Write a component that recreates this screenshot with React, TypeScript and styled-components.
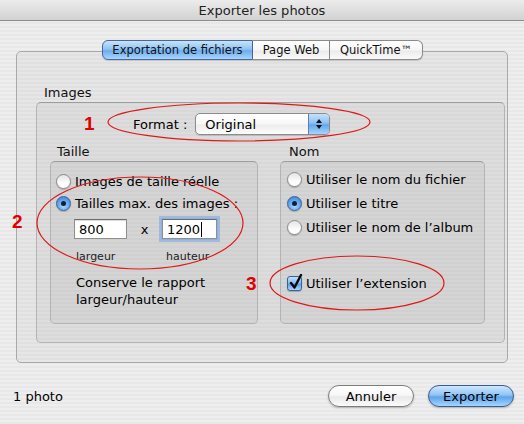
import React from "react";
import styled, { createGlobalStyle } from "styled-components";

const Global = createGlobalStyle`
  html, body { margin: 0; padding: 0; background: #ececec; }
  body { font-family: "Lucida Grande", "DejaVu Sans", sans-serif; color: #000; }
  #root { width: 524px; height: 424px; }
`;

const stripes = `repeating-linear-gradient(to bottom, #eeeeee 0px, #eeeeee 2px, #e8e8e8 2px, #e8e8e8 4px)`;

const Window = styled.div`
  position: relative;
  width: 524px;
  height: 424px;
  display: flex;
  flex-direction: column;
  overflow: hidden;
  background: ${stripes};
`;

const TitleBar = styled.div`
  height: 20px;
  border-bottom: 1px solid #8c8c8c;
  background: linear-gradient(to bottom, #ececec, #d2d2d2);
  display: flex;
  align-items: center;
  justify-content: center;
  font-size: 13px;
  color: #222;
`;

const Body = styled.div`
  flex: 1;
  display: flex;
  flex-direction: column;
  padding-top: 19px;
`;

const TabStrip = styled.div`
  position: relative;
  z-index: 1;
  display: flex;
  justify-content: center;
  margin-bottom: -9px;
  padding-left: 1px;
`;

const Tab = styled.div<{ $active?: boolean; $first?: boolean; $last?: boolean; $w: number }>`
  width: ${(p) => p.$w}px;
  height: 18px;
  box-sizing: content-box;
  display: flex;
  align-items: center;
  justify-content: center;
  font-size: 11.5px;
  border: 1px solid ${(p) => (p.$active ? "#46679b" : "#8a8a8a")};
  border-left-width: ${(p) => (p.$first ? 1 : 0)}px;
  border-radius: ${(p) => (p.$first ? "6px 0 0 6px" : p.$last ? "0 6px 6px 0" : "0")};
  background: ${(p) =>
    p.$active
      ? "linear-gradient(to bottom, #c9e3fb 0%, #8ec3f3 45%, #6cacee 55%, #a9d6ff 100%)"
      : "linear-gradient(to bottom, #ffffff 0%, #f6f6f6 50%, #ebebeb 55%, #fafafa 100%)"};
  box-shadow: 0 1px 1px rgba(0, 0, 0, 0.15);
  color: #111;
`;

const TabBox = styled.div`
  margin: 0 16px 0 16px;
  height: 312px;
  box-sizing: border-box;
  border: 1px solid #a9a9a9;
  border-radius: 5px;
  background: rgba(0, 0, 0, 0.03);
  padding: 33px 2px 0 19px;
  display: flex;
  flex-direction: column;
`;

const GroupLabel = styled.div<{ $indent: number }>`
  font-size: 13px;
  line-height: 16px;
  margin: 0 0 1px ${(p) => p.$indent}px;
  color: #111;
`;

const GroupBox = styled.div<{ $h: number }>`
  height: ${(p) => p.$h}px;
  box-sizing: border-box;
  border: 1px solid #b3b3b3;
  border-top-color: #9d9d9d;
  border-radius: 5px;
  background: rgba(0, 0, 0, 0.035);
`;

const ImagesBox = styled(GroupBox)`
  padding: 10px 0 0 13px;
  display: flex;
  flex-direction: column;
`;

const FormatRow = styled.div`
  display: flex;
  align-items: center;
  height: 22px;
  padding-left: 83px;
  gap: 8px;
  font-size: 13px;
`;

const Popup = styled.div`
  width: 135px;
  height: 22px;
  box-sizing: border-box;
  border: 1px solid #8c8c8c;
  border-radius: 5px;
  display: flex;
  overflow: hidden;
  background: linear-gradient(to bottom, #ffffff 0%, #f7f7f7 50%, #ececec 55%, #fdfdfd 100%);
  box-shadow: 0 1px 1px rgba(0, 0, 0, 0.15);
`;

const PopupText = styled.div`
  flex: 1;
  padding-left: 9px;
  display: flex;
  align-items: center;
  font-size: 13px;
`;

const PopupArrows = styled.div`
  width: 20px;
  border-left: 1px solid #5a7fb5;
  display: flex;
  align-items: center;
  justify-content: center;
  background: linear-gradient(to bottom, #c6e1fb 0%, #8cc2f4 45%, #64a7ec 55%, #a7d4fe 100%);
`;

const Columns = styled.div`
  display: grid;
  grid-template-columns: 208px 205px;
  column-gap: 22px;
  margin-top: 9px;
`;

const Column = styled.div`
  display: flex;
  flex-direction: column;
`;

const InnerBox = styled(GroupBox)<{ $pt: number; $pl: number }>`
  padding: ${(p) => p.$pt}px 0 0 ${(p) => p.$pl}px;
  display: flex;
  flex-direction: column;
`;

const OptionRow = styled.div<{ $mt?: number }>`
  display: flex;
  align-items: center;
  height: 20px;
  gap: 4px;
  margin-top: ${(p) => p.$mt ?? 0}px;
  font-size: 13px;
  white-space: nowrap;
`;

const RadioDot = styled.span<{ $on?: boolean }>`
  width: 15px;
  height: 15px;
  box-sizing: border-box;
  border-radius: 50%;
  flex: none;
  display: flex;
  align-items: center;
  justify-content: center;
  border: 1px solid ${(p) => (p.$on ? "#3d5f99" : "#8a8a8a")};
  background: ${(p) =>
    p.$on
      ? "radial-gradient(circle at 50% 70%, #a8d8ff 0%, #5da3ea 55%, #3a78c8 100%)"
      : "linear-gradient(to bottom, #e4e4e4 0%, #fbfbfb 60%, #ffffff 100%)"};
  box-shadow: 0 1px 1px rgba(0, 0, 0, 0.2);
  &::after {
    content: "";
    display: ${(p) => (p.$on ? "block" : "none")};
    width: 5px;
    height: 5px;
    border-radius: 50%;
    background: #10203a;
  }
`;

const CheckBox = styled.span`
  width: 15px;
  height: 15px;
  box-sizing: border-box;
  flex: none;
  border: 1px solid #3d5f99;
  border-radius: 3px;
  background: linear-gradient(to bottom, #c4e0fb 0%, #86bdf2 45%, #5c9fe8 55%, #a8d6ff 100%);
  box-shadow: 0 1px 1px rgba(0, 0, 0, 0.2);
  position: relative;
  overflow: visible;
  & > svg {
    position: absolute;
    left: 1px;
    top: -3px;
  }
`;

const SizeGrid = styled.div`
  display: grid;
  grid-template-columns: 53px 35px 55px;
  margin: 6px 0 0 18px;
  align-items: center;
`;

const Field = styled.div<{ $focus?: boolean }>`
  height: 20px;
  box-sizing: border-box;
  background: #fff;
  border: 1px solid #8f8f8f;
  border-top-color: #6c6c6c;
  display: flex;
  align-items: center;
  padding-left: 4px;
  font-size: 13px;
  box-shadow: ${(p) =>
    p.$focus ? "0 0 0 1px #8fb1dc, 0 0 0 3px rgba(140, 175, 225, 0.75)" : "inset 0 1px 1px rgba(0,0,0,0.15)"};
`;

const Times = styled.div`
  text-align: center;
  font-size: 13px;
`;

const Caret = styled.span`
  display: inline-block;
  width: 1px;
  height: 15px;
  background: #000;
  margin-left: 1px;
`;

const SmallLabel = styled.div<{ $pl: number }>`
  font-size: 11px;
  line-height: 14px;
  margin-top: 11px;
  padding-left: ${(p) => p.$pl}px;
  color: #222;
`;

const Note = styled.div`
  font-size: 13px;
  line-height: 17px;
  margin: 10px 0 0 20px;
`;

const Footer = styled.div`
  flex: 1;
  display: flex;
  align-items: center;
  padding: 5px 10px 0 13px;
  font-size: 13px;
`;

const Spacer = styled.div`
  flex: 1;
`;

const PillButton = styled.div<{ $primary?: boolean }>`
  width: 86px;
  height: 22px;
  box-sizing: border-box;
  margin-left: 14px;
  display: flex;
  align-items: center;
  justify-content: center;
  border-radius: 11px;
  font-size: 13px;
  border: 1px solid ${(p) => (p.$primary ? "#3a5b92" : "#7d7d7d")};
  background: ${(p) =>
    p.$primary
      ? "linear-gradient(to bottom, #cfe7fd 0%, #8fc4f4 45%, #5fa3ea 55%, #a4d6ff 100%)"
      : "linear-gradient(to bottom, #ffffff 0%, #f7f7f7 45%, #e9e9e9 55%, #fbfbfb 100%)"};
  box-shadow: 0 1px 2px rgba(0, 0, 0, 0.25);
`;

const Overlay = styled.svg`
  position: absolute;
  left: 0;
  top: 0;
  pointer-events: none;
`;

const Marker = styled.span<{ $x: number; $y: number }>`
  position: absolute;
  left: ${(p) => p.$x}px;
  top: ${(p) => p.$y}px;
  font-family: "Liberation Sans", Arial, sans-serif;
  font-weight: bold;
  font-size: 19px;
  line-height: 19px;
  color: #e00000;
`;

export default function App() {
  return (
    <>
      <Global />
      <Window>
        <TitleBar>Exporter les photos</TitleBar>
        <Body>
          <TabStrip>
            <Tab $active $first $w={149}>Exportation de fichiers</Tab>
            <Tab $w={76}>Page Web</Tab>
            <Tab $last $w={92}>QuickTime™</Tab>
          </TabStrip>
          <TabBox>
            <GroupLabel $indent={8}>Images</GroupLabel>
            <ImagesBox $h={241}>
              <FormatRow>
                <span>Format :</span>
                <Popup>
                  <PopupText>Original</PopupText>
                  <PopupArrows>
                    <svg width="8" height="12" viewBox="0 0 8 12">
                      <path d="M4 1 L7 5 L1 5 Z" fill="#111" />
                      <path d="M4 11 L7 7 L1 7 Z" fill="#111" />
                    </svg>
                  </PopupArrows>
                </Popup>
              </FormatRow>
              <Columns>
                <Column>
                  <GroupLabel $indent={7}>Taille</GroupLabel>
                  <InnerBox $h={163} $pt={9} $pl={5}>
                    <OptionRow>
                      <RadioDot />
                      Images de taille réelle
                    </OptionRow>
                    <OptionRow $mt={2}>
                      <RadioDot $on />
                      Tailles max. des images :
                    </OptionRow>
                    <SizeGrid>
                      <Field>800</Field>
                      <Times>x</Times>
                      <Field $focus>
                        1200
                        <Caret />
                      </Field>
                      <SmallLabel $pl={2}>largeur</SmallLabel>
                      <span />
                      <SmallLabel $pl={4}>hauteur</SmallLabel>
                    </SizeGrid>
                    <Note>
                      Conserve le rapport
                      <br />
                      largeur/hauteur
                    </Note>
                  </InnerBox>
                </Column>
                <Column>
                  <GroupLabel $indent={9}>Nom</GroupLabel>
                  <InnerBox $h={163} $pt={7} $pl={6}>
                    <OptionRow>
                      <RadioDot />
                      Utiliser le nom du fichier
                    </OptionRow>
                    <OptionRow $mt={4}>
                      <RadioDot $on />
                      Utiliser le titre
                    </OptionRow>
                    <OptionRow $mt={4}>
                      <RadioDot />
                      Utiliser le nom de l’album
                    </OptionRow>
                    <OptionRow $mt={36}>
                      <CheckBox>
                        <svg width="14" height="16" viewBox="0 0 14 16">
                          <path d="M2 9 L5.5 13.5 L12 1" stroke="#0a0a0a" strokeWidth="2.4" fill="none" strokeLinecap="round" strokeLinejoin="round" />
                        </svg>
                      </CheckBox>
                      Utiliser l’extension
                    </OptionRow>
                  </InnerBox>
                </Column>
              </Columns>
            </ImagesBox>
          </TabBox>
          <Footer>
            <span>1 photo</span>
            <Spacer />
            <PillButton>Annuler</PillButton>
            <PillButton $primary>Exporter</PillButton>
          </Footer>
        </Body>
        <Overlay width="524" height="424" viewBox="0 0 524 424">
          <ellipse cx="239" cy="122" rx="131" ry="19" fill="none" stroke="#e01818" strokeWidth="1.2" />
          <ellipse cx="140" cy="223" rx="103" ry="46" fill="none" stroke="#e01818" strokeWidth="1.2" />
          <ellipse cx="357" cy="283" rx="87" ry="27" fill="none" stroke="#e01818" strokeWidth="1.2" />
        </Overlay>
        <Marker $x={84} $y={114}>1</Marker>
        <Marker $x={12} $y={212}>2</Marker>
        <Marker $x={246} $y={274}>3</Marker>
      </Window>
    </>
  );
}
